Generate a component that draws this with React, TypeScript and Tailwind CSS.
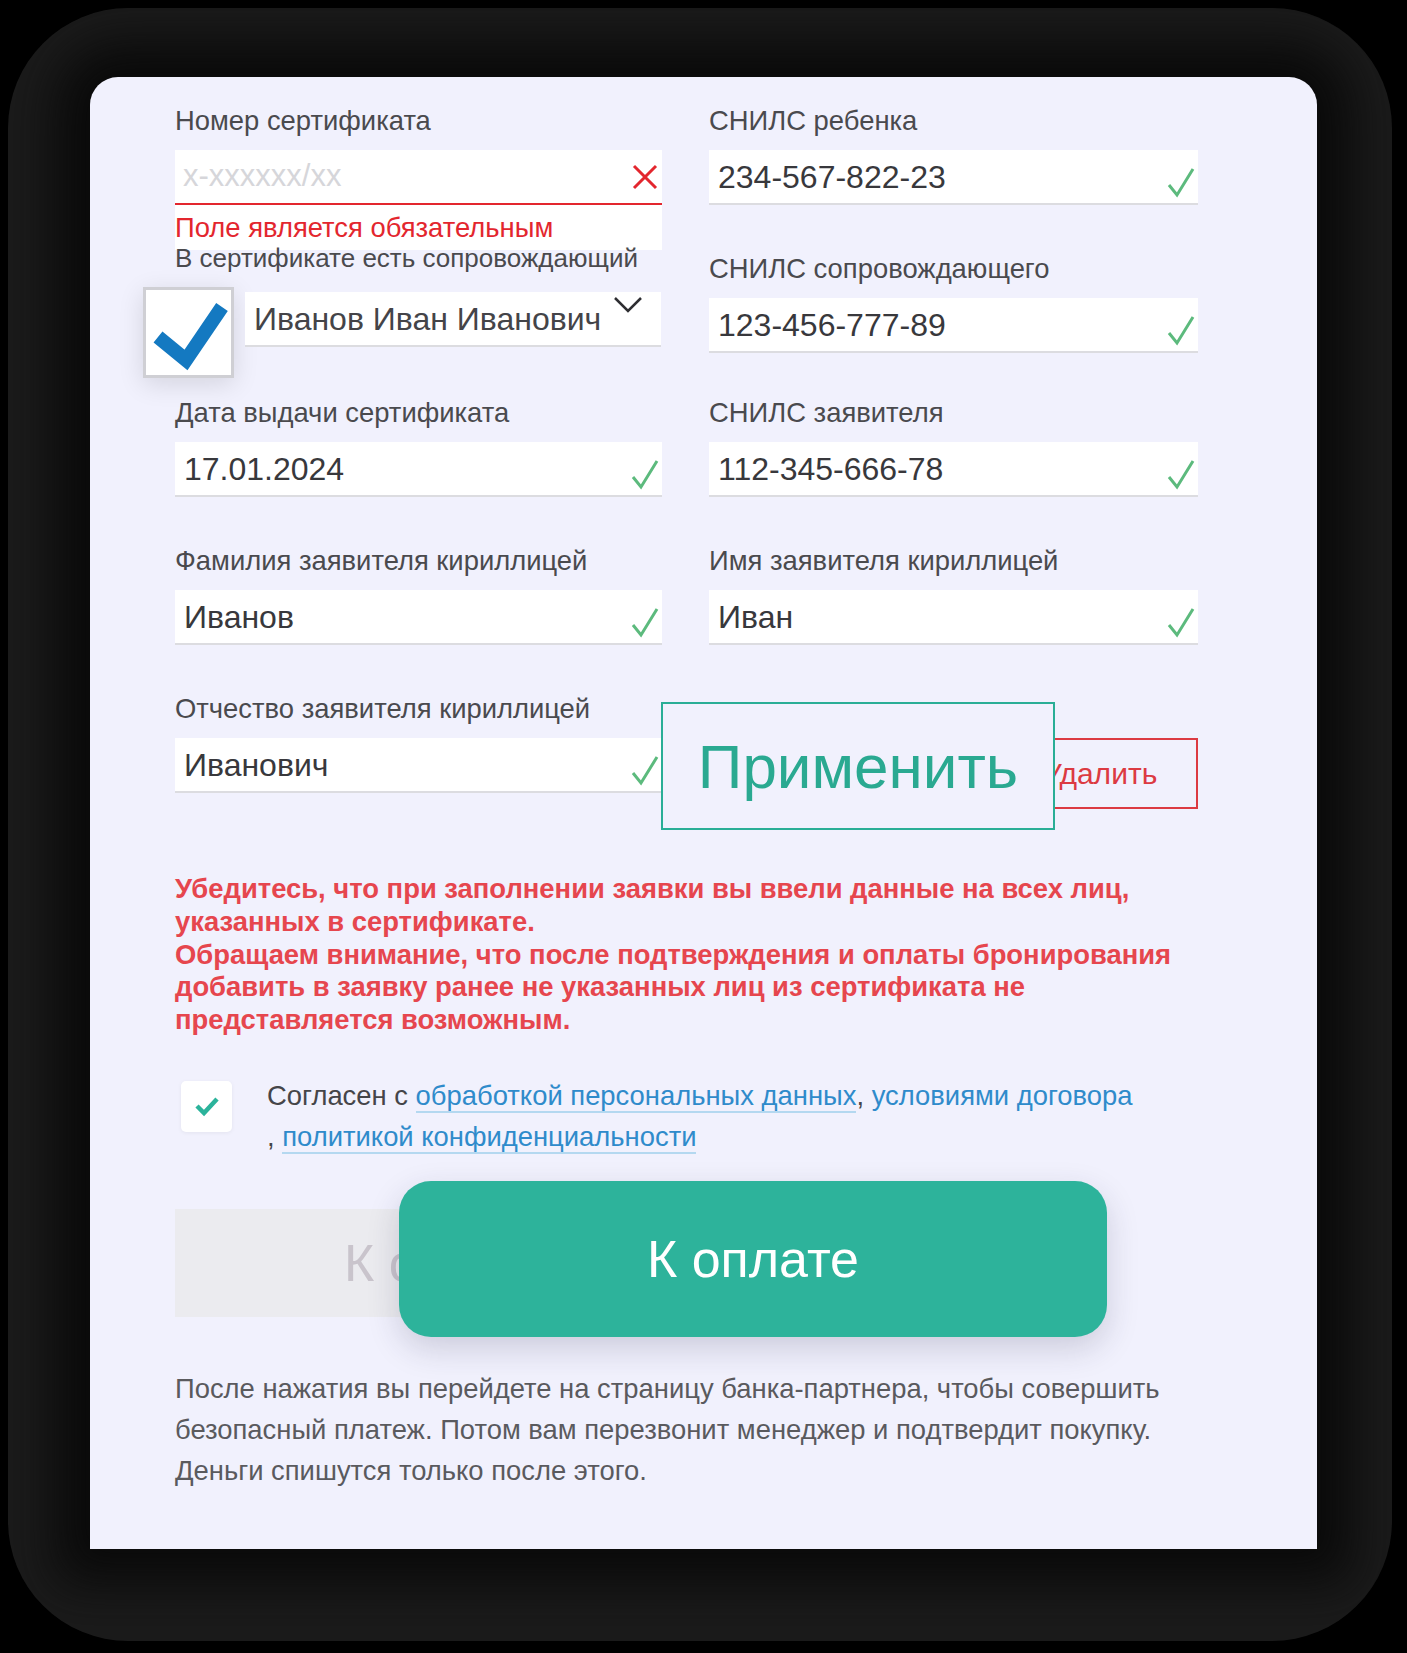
import React from 'react';

function CheckIcon() {
  return (
    <svg width="30" height="32" viewBox="0 0 30 32" className="self-end mb-[5px] shrink-0">
      <path d="M3 19 L11 29 L27 3" fill="none" stroke="#5cba7d" strokeWidth="3" />
    </svg>
  );
}

function CrossIcon() {
  return (
    <svg width="28" height="26" viewBox="0 0 28 26" className="shrink-0">
      <path d="M3 2 L25 24 M25 2 L3 24" fill="none" stroke="#e3262e" strokeWidth="3" />
    </svg>
  );
}

interface FieldProps {
  label: string;
  value?: string;
  placeholder?: string;
  error?: boolean;
}

function Field({ label, value, placeholder, error }: FieldProps) {
  return (
    <div className="flex flex-col">
      <div className="text-[27.4px] leading-[30px] text-[#4a4a4e] mb-[14px] whitespace-nowrap">{label}</div>
      <div
        className={
          error
            ? 'h-[55px] bg-white border-b-2 border-[#e3262e] flex items-center justify-between pl-[8px] pr-[3px]'
            : 'h-[55px] bg-white border-b-2 border-[#dcdce0] flex items-center justify-between pl-[9px] pr-[2px]'
        }
      >
        {value ? (
          <span className="text-[32px] text-[#38383c]">{value}</span>
        ) : (
          <span className="text-[31px] text-[#d6d6da]">{placeholder}</span>
        )}
        {error ? <CrossIcon /> : <CheckIcon />}
      </div>
    </div>
  );
}

export default function App() {
  return (
    <div className="w-[1407px] h-[1653px] bg-black pt-[8px] pl-[8px] pr-[15px] pb-[12px] font-['Liberation_Sans',Arial,sans-serif]">
      <div className="h-full rounded-[120px] bg-[#1b1b1b] pt-[69px] pl-[82px]">
        <div className="relative w-[1227px] h-[1472px] rounded-t-[28px] bg-[#f1f1fd] pl-[85px] pr-[119px] pt-[29px] shadow-[0_0_50px_35px_#0a0a0a]">
          {/* top: certificate + accompanying */}
          <div className="flex gap-[47px]">
            <div className="w-[487px] flex flex-col">
              <Field label="Номер сертификата" placeholder="x-xxxxxx/xx" error />
              <div className="h-[45px] bg-white flex items-center">
                <span className="text-[27.4px] text-[#e3262e] whitespace-nowrap">Поле является обязательным</span>
              </div>
              <div className="text-[26px] leading-[16px] text-[#4a4a4e] whitespace-nowrap">
                В сертификате есть сопровождающий
              </div>
              <div className="flex items-start mt-[21px] -ml-[32px]">
                <div className="w-[91px] h-[91px] bg-white border-[3px] border-[#cfcfd4] shadow-[0_6px_24px_rgba(0,0,0,0.12)] flex items-center justify-center shrink-0">
                  <svg width="85" height="85" viewBox="0 0 85 85">
                    <path d="M12 47 L40 70 L76 17" fill="none" stroke="#1479c1" strokeWidth="14" strokeLinejoin="miter" />
                  </svg>
                </div>
                <div className="relative ml-[11px] mt-[5px] w-[416px] h-[55px] bg-white border-b-2 border-[#dcdce0] flex items-center pl-[9px]">
                  <span className="text-[32px] text-[#444448] whitespace-nowrap">Иванов Иван Иванович</span>
                  <svg width="30" height="18" viewBox="0 0 30 18" className="absolute right-[18px] top-[4px]">
                    <path d="M2 2 L15 15 L28 2" fill="none" stroke="#2e2e32" strokeWidth="2.5" />
                  </svg>
                </div>
              </div>
            </div>
            <div className="w-[489px] flex flex-col gap-[49px]">
              <Field label="СНИЛС ребенка" value="234-567-822-23" />
              <Field label="СНИЛС сопровождающего" value="123-456-777-89" />
            </div>
          </div>

          {/* applicant fields */}
          <div className="grid grid-cols-[487px_489px] gap-x-[47px] gap-y-[49px] mt-[20px]">
            <Field label="Дата выдачи сертификата" value="17.01.2024" />
            <Field label="СНИЛС заявителя" value="112-345-666-78" />
            <Field label="Фамилия заявителя кириллицей" value="Иванов" />
            <Field label="Имя заявителя кириллицей" value="Иван" />
            <Field label="Отчество заявителя кириллицей" value="Иванович" />
            <div className="flex flex-col items-end pt-[44px]">
              <button className="w-[196px] h-[71px] border-2 border-[#dc3a42] text-[#dc3a42] text-[30px] flex items-center justify-center">
                Удалить
              </button>
            </div>
          </div>

          {/* warning */}
          <p className="mt-[64px] text-[27.4px] leading-[32.75px] font-bold text-[#e6464e] whitespace-nowrap">
            Убедитесь, что при заполнении заявки вы ввели данные на всех лиц,
            <br />
            указанных в сертификате.
            <br />
            Обращаем внимание, что после подтверждения и оплаты бронирования
            <br />
            добавить в заявку ранее не указанных лиц из сертификата не
            <br />
            представляется возможным.
          </p>

          {/* consent */}
          <div className="flex items-start mt-[38px]">
            <div className="ml-[6px] mt-[6px] w-[51px] h-[51px] rounded-[5px] bg-white shadow-[0_1px_4px_rgba(0,0,0,0.06)] flex items-center justify-center shrink-0">
              <svg width="26" height="22" viewBox="0 0 26 22">
                <path d="M3 11 L10 18 L23 4" fill="none" stroke="#2bb39b" strokeWidth="4.5" />
              </svg>
            </div>
            <div className="ml-[35px] text-[27.4px] leading-[41px] text-[#454549] whitespace-nowrap">
              Согласен с{' '}
              <span className="text-[#2f8bcb] border-b-2 border-[#b4d8f0]">обработкой персональных данных</span>,{' '}
              <span className="text-[#2f8bcb]">условиями договора</span>
              <br />,{' '}
              <span className="text-[#2f8bcb] border-b-2 border-[#b4d8f0]">политикой конфиденциальности</span>
            </div>
          </div>

          {/* disabled pay */}
          <div className="mt-[52px] w-[550px] h-[108px] bg-[#ebebef] flex items-center justify-center">
            <span className="text-[52px] text-[#c9c4cc]">К оплате</span>
          </div>

          {/* footer note */}
          <p className="mt-[51px] text-[27.4px] leading-[41px] text-[#5a5a5e] whitespace-nowrap">
            После нажатия вы перейдете на страницу банка-партнера, чтобы совершить
            <br />
            безопасный платеж. Потом вам перезвонит менеджер и подтвердит покупку.
            <br />
            Деньги спишутся только после этого.
          </p>

          {/* overlays */}
          <div className="absolute left-[571px] top-[625px] w-[394px] h-[128px] border-2 border-[#2aae96] bg-[#f1f1fd] flex items-center justify-center">
            <span className="text-[62px] text-[#2aa991]">Применить</span>
          </div>
          <div className="absolute left-[309px] top-[1104px] w-[708px] h-[156px] rounded-[32px] bg-[#2db39b] shadow-[0_12px_32px_rgba(40,40,70,0.18)] flex items-center justify-center">
            <span className="text-[52px] text-white">К оплате</span>
          </div>
        </div>
      </div>
    </div>
  );
}
